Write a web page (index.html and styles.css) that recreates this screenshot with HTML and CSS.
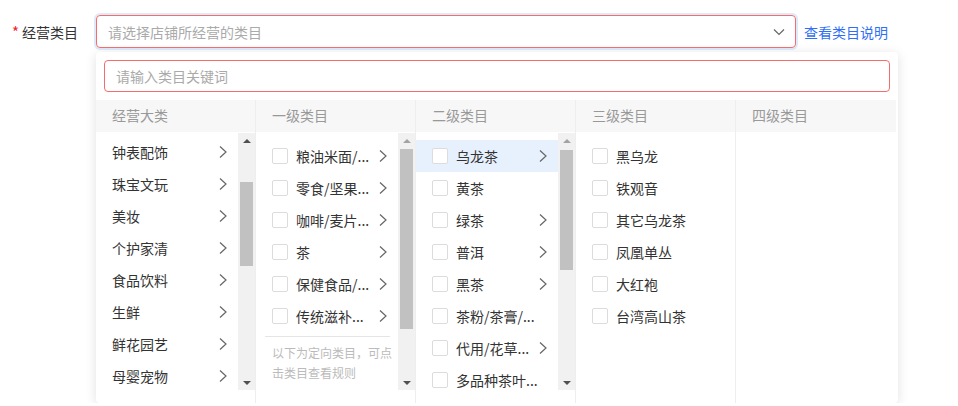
FILE: index.html
```html
<!DOCTYPE html>
<html>
<head>
<meta charset="utf-8">
<link rel="stylesheet" href="styles.css">
</head>
<body>

<!--form row-->
<div class="form-row">
	<div class="label"><span class="star">*</span>经营类目</div>
	<div class="select">
		<span class="select-text">请选择店铺所经营的类目</span>
		<svg class="select-arrow" width="12" height="8" viewBox="0 0 12 8"><polyline points="1,1.5 6,6.5 11,1.5" fill="none" stroke="#666" stroke-width="1.2"/></svg>
	</div>
	<a class="link" href="#">查看类目说明</a>
</div>

<!--dropdown-->
<div class="panel">
	<input class="search" type="text" placeholder="请输入类目关键词">

	<div class="cols">
		<!--经营大类-->
		<div class="col">
			<div class="col-head">经营大类</div>
			<div class="col-body">
				<div class="list list-first">
					<div class="row"><span class="txt">钟表配饰</span><svg class="chev" width="8" height="12" viewBox="0 0 8 12"><polyline points="1,0.5 7,6 1,11.5" fill="none" stroke="#666" stroke-width="1.2"/></svg></div>
					<div class="row"><span class="txt">珠宝文玩</span><svg class="chev" width="8" height="12" viewBox="0 0 8 12"><polyline points="1,0.5 7,6 1,11.5" fill="none" stroke="#666" stroke-width="1.2"/></svg></div>
					<div class="row"><span class="txt">美妆</span><svg class="chev" width="8" height="12" viewBox="0 0 8 12"><polyline points="1,0.5 7,6 1,11.5" fill="none" stroke="#666" stroke-width="1.2"/></svg></div>
					<div class="row"><span class="txt">个护家清</span><svg class="chev" width="8" height="12" viewBox="0 0 8 12"><polyline points="1,0.5 7,6 1,11.5" fill="none" stroke="#666" stroke-width="1.2"/></svg></div>
					<div class="row"><span class="txt">食品饮料</span><svg class="chev" width="8" height="12" viewBox="0 0 8 12"><polyline points="1,0.5 7,6 1,11.5" fill="none" stroke="#666" stroke-width="1.2"/></svg></div>
					<div class="row"><span class="txt">生鲜</span><svg class="chev" width="8" height="12" viewBox="0 0 8 12"><polyline points="1,0.5 7,6 1,11.5" fill="none" stroke="#666" stroke-width="1.2"/></svg></div>
					<div class="row"><span class="txt">鲜花园艺</span><svg class="chev" width="8" height="12" viewBox="0 0 8 12"><polyline points="1,0.5 7,6 1,11.5" fill="none" stroke="#666" stroke-width="1.2"/></svg></div>
					<div class="row"><span class="txt">母婴宠物</span><svg class="chev" width="8" height="12" viewBox="0 0 8 12"><polyline points="1,0.5 7,6 1,11.5" fill="none" stroke="#666" stroke-width="1.2"/></svg></div>
				</div>
				<div class="sbar">
					<div class="sbtn"><span class="tri-up"></span></div>
					<div class="strack"><div class="thumb" style="margin-top:34px;height:84px"></div></div>
					<div class="sbtn"><span class="tri-down"></span></div>
				</div>
			</div>
		</div>

		<!--一级类目-->
		<div class="col">
			<div class="col-head">一级类目</div>
			<div class="col-body">
				<div class="list">
					<div class="row"><span class="box"></span><span class="txt">粮油米面/...</span><svg class="chev" width="8" height="12" viewBox="0 0 8 12"><polyline points="1,0.5 7,6 1,11.5" fill="none" stroke="#666" stroke-width="1.2"/></svg></div>
					<div class="row"><span class="box"></span><span class="txt">零食/坚果...</span><svg class="chev" width="8" height="12" viewBox="0 0 8 12"><polyline points="1,0.5 7,6 1,11.5" fill="none" stroke="#666" stroke-width="1.2"/></svg></div>
					<div class="row"><span class="box"></span><span class="txt">咖啡/麦片...</span><svg class="chev" width="8" height="12" viewBox="0 0 8 12"><polyline points="1,0.5 7,6 1,11.5" fill="none" stroke="#666" stroke-width="1.2"/></svg></div>
					<div class="row"><span class="box"></span><span class="txt">茶</span><svg class="chev" width="8" height="12" viewBox="0 0 8 12"><polyline points="1,0.5 7,6 1,11.5" fill="none" stroke="#666" stroke-width="1.2"/></svg></div>
					<div class="row"><span class="box"></span><span class="txt">保健食品/...</span><svg class="chev" width="8" height="12" viewBox="0 0 8 12"><polyline points="1,0.5 7,6 1,11.5" fill="none" stroke="#666" stroke-width="1.2"/></svg></div>
					<div class="row"><span class="box"></span><span class="txt">传统滋补...</span><svg class="chev" width="8" height="12" viewBox="0 0 8 12"><polyline points="1,0.5 7,6 1,11.5" fill="none" stroke="#666" stroke-width="1.2"/></svg></div>
					<div class="divider"></div>
					<div class="note">以下为定向类目，可点击类目查看规则</div>
				</div>
				<div class="sbar">
					<div class="sbtn"><span class="tri-up off"></span></div>
					<div class="strack"><div class="thumb" style="margin-top:1px;height:180px"></div></div>
					<div class="sbtn"><span class="tri-down"></span></div>
				</div>
			</div>
		</div>

		<!--二级类目-->
		<div class="col">
			<div class="col-head">二级类目</div>
			<div class="col-body">
				<div class="list">
					<div class="row active"><span class="box"></span><span class="txt">乌龙茶</span><svg class="chev" width="8" height="12" viewBox="0 0 8 12"><polyline points="1,0.5 7,6 1,11.5" fill="none" stroke="#666" stroke-width="1.2"/></svg></div>
					<div class="row"><span class="box"></span><span class="txt">黄茶</span></div>
					<div class="row"><span class="box"></span><span class="txt">绿茶</span><svg class="chev" width="8" height="12" viewBox="0 0 8 12"><polyline points="1,0.5 7,6 1,11.5" fill="none" stroke="#666" stroke-width="1.2"/></svg></div>
					<div class="row"><span class="box"></span><span class="txt">普洱</span><svg class="chev" width="8" height="12" viewBox="0 0 8 12"><polyline points="1,0.5 7,6 1,11.5" fill="none" stroke="#666" stroke-width="1.2"/></svg></div>
					<div class="row"><span class="box"></span><span class="txt">黑茶</span><svg class="chev" width="8" height="12" viewBox="0 0 8 12"><polyline points="1,0.5 7,6 1,11.5" fill="none" stroke="#666" stroke-width="1.2"/></svg></div>
					<div class="row"><span class="box"></span><span class="txt">茶粉/茶膏/...</span></div>
					<div class="row"><span class="box"></span><span class="txt">代用/花草...</span><svg class="chev" width="8" height="12" viewBox="0 0 8 12"><polyline points="1,0.5 7,6 1,11.5" fill="none" stroke="#666" stroke-width="1.2"/></svg></div>
					<div class="row"><span class="box"></span><span class="txt">多品种茶叶...</span></div>
				</div>
				<div class="sbar">
					<div class="sbtn"><span class="tri-up off"></span></div>
					<div class="strack"><div class="thumb" style="margin-top:2px;height:120px"></div></div>
					<div class="sbtn"><span class="tri-down"></span></div>
				</div>
			</div>
		</div>

		<!--三级类目-->
		<div class="col">
			<div class="col-head">三级类目</div>
			<div class="col-body">
				<div class="list">
					<div class="row"><span class="box"></span><span class="txt">黑乌龙</span></div>
					<div class="row"><span class="box"></span><span class="txt">铁观音</span></div>
					<div class="row"><span class="box"></span><span class="txt">其它乌龙茶</span></div>
					<div class="row"><span class="box"></span><span class="txt">凤凰单丛</span></div>
					<div class="row"><span class="box"></span><span class="txt">大红袍</span></div>
					<div class="row"><span class="box"></span><span class="txt">台湾高山茶</span></div>
				</div>
			</div>
		</div>

		<!--四级类目-->
		<div class="col">
			<div class="col-head">四级类目</div>
			<div class="col-body"></div>
		</div>
	</div>
</div>

</body>
</html>
```

FILE: styles.css
```css
	body {
		margin: 0;
		font-family: "Noto Sans CJK SC", "Microsoft YaHei", sans-serif;
		font-size: 14px;
		color: #333;
		background: #fff;
	}

	.form-row {
		display: flex;
		align-items: center;
		padding-top: 15px;
	}
	.label {
		width: 96px;
		padding-left: 12px;
		box-sizing: border-box;
		color: #333;
		line-height: 20px;
	}
	.star {
		color: #f5222d;
		font-size: 15px;
		margin-right: 3px;
	}
	.select {
		width: 700px;
		height: 33px;
		box-sizing: border-box;
		border: 1px solid #f56c6c;
		border-radius: 4px;
		box-shadow: 0 0 0 2px rgba(64, 140, 240, 0.18);
		display: flex;
		align-items: center;
		padding: 0 10px 0 11px;
	}
	.select-text {
		flex: 1;
		color: #aaa;
	}
	.link {
		margin-left: 8px;
		color: #2f6ff5;
		text-decoration: none;
	}

	.panel {
		margin: 4px 0 0 96px;
		width: 802px;
		padding-top: 8px;
		box-sizing: border-box;
		background: #fff;
		border-radius: 4px;
		box-shadow: 0 2px 12px rgba(0, 0, 0, 0.12);
	}
	.search {
		display: block;
		margin: 0 8px;
		width: 786px;
		height: 32px;
		box-sizing: border-box;
		border: 1px solid #f56c6c;
		border-radius: 4px;
		padding: 0 11px;
		font-family: inherit;
		font-size: 14px;
		outline: none;
	}
	.search::placeholder {
		color: #aaa;
	}

	.cols {
		display: flex;
		margin-top: 8px;
	}
	.col {
		width: 160px;
		box-sizing: border-box;
		border-right: 1px solid #eee;
	}
	.col:last-child {
		border-right: none;
	}
	.col-head {
		height: 32px;
		line-height: 31px;
		padding-left: 16px;
		background: #f7f7f7;
		color: #999;
	}
	.col-body {
		display: flex;
		height: 258px;
		margin-bottom: 13px;
		overflow: hidden;
	}
	.list {
		flex: 1;
		min-width: 0;
		padding-top: 8px;
	}
	.list-first {
		padding-top: 4px;
	}

	.row {
		display: flex;
		align-items: center;
		height: 32px;
		padding: 0 11px 0 16px;
	}
	.row.active {
		background: #e7f0fd;
	}
	.txt {
		flex: 1;
		white-space: nowrap;
		overflow: hidden;
		line-height: 20px;
		margin-top: -1px;
	}
	.box {
		width: 16px;
		height: 16px;
		box-sizing: border-box;
		border: 1px solid #dcdcdc;
		border-radius: 2px;
		background: #fff;
		margin-right: 8px;
		flex: none;
	}
	.chev {
		flex: none;
	}

	.divider {
		margin: 4px 8px 0 9px;
		border-top: 1px solid #e5e5e5;
	}
	.note {
		padding: 6px 4px 0 16px;
		font-size: 12px;
		line-height: 20px;
		color: #bbb;
	}

	.sbar {
		width: 17px;
		flex: none;
		margin-top: 1px;
		background: #f1f1f1;
		display: flex;
		flex-direction: column;
	}
	.sbtn {
		height: 15px;
		display: flex;
		align-items: center;
		justify-content: center;
	}
	.strack {
		flex: 1;
	}
	.thumb {
		margin: 0 2px;
		background: #c1c1c1;
	}
	.tri-up {
		border-left: 4px solid transparent;
		border-right: 4px solid transparent;
		border-bottom: 4px solid #505050;
	}
	.tri-up.off {
		border-bottom-color: #a3a3a3;
	}
	.tri-down {
		border-left: 4px solid transparent;
		border-right: 4px solid transparent;
		border-top: 4px solid #505050;
	}
```
